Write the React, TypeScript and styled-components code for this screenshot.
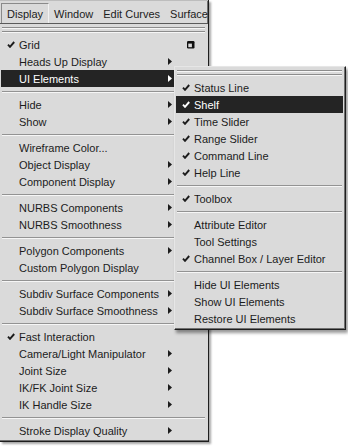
import styled, { createGlobalStyle } from 'styled-components';

type Entry = { label: string; check?: boolean; arrow?: boolean; option?: boolean; active?: boolean } | 'sep';

const mainItems: Entry[] = [
  { label: 'Grid', check: true, option: true },
  { label: 'Heads Up Display', arrow: true },
  { label: 'UI Elements', arrow: true, active: true },
  'sep',
  { label: 'Hide', arrow: true },
  { label: 'Show', arrow: true },
  'sep',
  { label: 'Wireframe Color...' },
  { label: 'Object Display', arrow: true },
  { label: 'Component Display', arrow: true },
  'sep',
  { label: 'NURBS Components', arrow: true },
  { label: 'NURBS Smoothness', arrow: true },
  'sep',
  { label: 'Polygon Components', arrow: true },
  { label: 'Custom Polygon Display' },
  'sep',
  { label: 'Subdiv Surface Components', arrow: true },
  { label: 'Subdiv Surface Smoothness', arrow: true },
  'sep',
  { label: 'Fast Interaction', check: true },
  { label: 'Camera/Light Manipulator', arrow: true },
  { label: 'Joint Size', arrow: true },
  { label: 'IK/FK Joint Size', arrow: true },
  { label: 'IK Handle Size', arrow: true },
  'sep',
  { label: 'Stroke Display Quality', arrow: true },
];

const subItems: Entry[] = [
  { label: 'Status Line', check: true },
  { label: 'Shelf', check: true, active: true },
  { label: 'Time Slider', check: true },
  { label: 'Range Slider', check: true },
  { label: 'Command Line', check: true },
  { label: 'Help Line', check: true },
  'sep',
  { label: 'Toolbox', check: true },
  'sep',
  { label: 'Attribute Editor' },
  { label: 'Tool Settings' },
  { label: 'Channel Box / Layer Editor', check: true },
  'sep',
  { label: 'Hide UI Elements' },
  { label: 'Show UI Elements' },
  { label: 'Restore UI Elements' },
];

const GlobalStyle = createGlobalStyle`
  html, body {
    margin: 0;
    background: #fff;
  }
  body {
    font-family: "Liberation Sans", Arial, sans-serif;
    font-size: 11px;
    color: #1c1c1c;
  }
`;

const Screen = styled.div`
  position: relative;
  width: 348px;
  height: 446px;
  overflow: hidden;
`;

const MenuColumn = styled.div`
  width: 208px;
  display: flex;
  flex-direction: column;
  background: #dadada;
  border-right: 1px solid #1e1e1e;
  box-shadow: inset -1px 0 0 #707070, 2px 2px 2px rgba(0, 0, 0, 0.35);
`;

const MenuBar = styled.div`
  height: 22px;
  display: flex;
  align-items: flex-end;
  overflow: hidden;
  white-space: nowrap;
  border-top: 1px solid #bdbdbd;
  border-bottom: 1px solid #5a5a5a;
`;

const BarItem = styled.div<{ $pressed?: boolean }>`
  height: 19px;
  display: flex;
  align-items: center;
  padding: 0 ${(p) => (p.$pressed ? '5px' : '4px')};
  margin-left: ${(p) => (p.$pressed ? '1px' : '0')};
  font-size: 11px;
  border: 1px solid transparent;
  border-bottom: 0;
  ${(p) => p.$pressed && 'border-color: #8a8a8a #f2f2f2 transparent #8a8a8a;'}
`;

const Menu = styled.div<{ $sub?: boolean }>`
  display: flex;
  flex-direction: column;
  padding: 0 2px 2px 1px;
  background: #dadada;
  ${(p) =>
    p.$sub
      ? `
    position: absolute;
    left: 174px;
    top: 66px;
    width: 172px;
    box-sizing: border-box;
    border: 1px solid #1e1e1e;
    border-color: #e6e6e6 #1e1e1e #1e1e1e #e6e6e6;
    box-shadow: inset -1px -1px 0 #707070, 2px 3px 3px rgba(0, 0, 0, 0.4);
  `
      : `
    border-bottom: 1px solid #1e1e1e;
    box-shadow: inset 0 -1px 0 #707070;
  `}
`;

const TearOff = styled.div`
  height: 12px;
  display: flex;
  flex-direction: column;
  justify-content: center;
  gap: 2px;
  padding: 0 1px;
  &::before,
  &::after {
    content: '';
    display: block;
    border-top: 1px solid #8c8c8c;
    border-bottom: 1px solid #f6f6f6;
  }
`;

const Row = styled.div<{ $active?: boolean }>`
  height: 17px;
  display: grid;
  grid-template-columns: 18px 1fr 22px 22px;
  align-items: center;
  white-space: nowrap;
  background: ${(p) => (p.$active ? '#242424' : 'transparent')};
  color: ${(p) => (p.$active ? '#fff' : '#1c1c1c')};
`;

const SubRow = styled(Row)`
  grid-template-columns: 18px 1fr;
`;

const CheckCell = styled.span`
  display: flex;
  padding-left: 6px;
`;

const ArrowCell = styled.span`
  display: flex;
  padding-left: 6px;
`;

const OptionCell = styled.span`
  display: flex;
  padding-left: 2px;
`;

const Separator = styled.div`
  height: 9px;
  display: flex;
  align-items: center;
  padding: 0 1px;
  &::before {
    content: '';
    flex: 1;
    border-top: 1px solid #939393;
    border-bottom: 1px solid #f6f6f6;
  }
`;

function Check() {
  return (
    <svg width="8" height="7" viewBox="0 0 8 7">
      <polyline points="1,3.6 3,5.8 7.2,1" fill="none" stroke="currentColor" strokeWidth="1.9" />
    </svg>
  );
}

function Arrow() {
  return (
    <svg width="4" height="7" viewBox="0 0 4 7">
      <polygon points="0,0 4,3.5 0,7" fill="currentColor" />
    </svg>
  );
}

function OptionBox() {
  return (
    <svg width="9" height="8" viewBox="0 0 9 8">
      <rect x="1" y="0" width="7.5" height="7.5" rx="1.2" fill="#111" />
      <rect x="2.3" y="2.6" width="3.6" height="3.6" fill="#dadada" />
    </svg>
  );
}

function Items({ items, sub }: { items: Entry[]; sub?: boolean }) {
  return (
    <>
      {items.map((it, i) => {
        if (it === 'sep') return <Separator key={i} />;
        const R = sub ? SubRow : Row;
        return (
          <R key={i} $active={it.active}>
            <CheckCell>{it.check && <Check />}</CheckCell>
            <span>{it.label}</span>
            {!sub && <ArrowCell>{it.arrow && <Arrow />}</ArrowCell>}
            {!sub && <OptionCell>{it.option && <OptionBox />}</OptionCell>}
          </R>
        );
      })}
    </>
  );
}

export default function App() {
  return (
    <Screen>
      <GlobalStyle />
      <MenuColumn>
        <MenuBar>
          <BarItem $pressed>Display</BarItem>
          <BarItem>Window</BarItem>
          <BarItem>Edit Curves</BarItem>
          <BarItem>Surface</BarItem>
        </MenuBar>
        <Menu>
          <TearOff />
          <Items items={mainItems} />
        </Menu>
      </MenuColumn>
      <Menu $sub>
        <TearOff />
        <Items items={subItems} sub />
      </Menu>
    </Screen>
  );
}
